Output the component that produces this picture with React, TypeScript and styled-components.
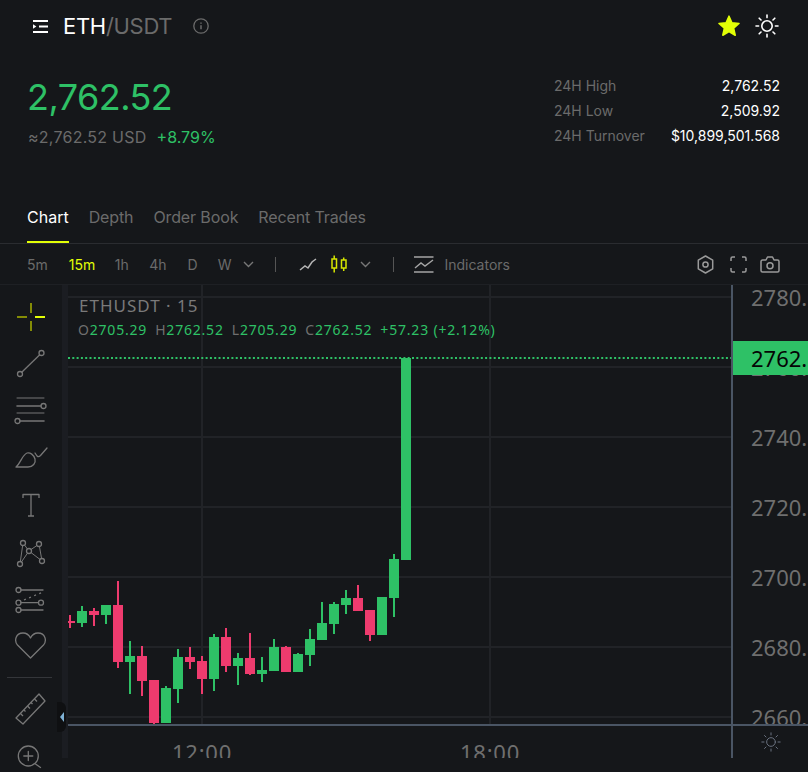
import React from "react";
import styled, { createGlobalStyle } from "styled-components";

const GREEN = "#2ec166";
const PINK = "#ee3b6e";
const YELLOW = "#e2ff06";
const GREY = "#6b6b6b";
const ICON = "#777777";
const AXIS = "#4a5564";
const GRID = "#212327";
const CHART_FONT = `"Noto Sans", sans-serif`;

const GlobalStyle = createGlobalStyle`
  html, body {
    margin: 0;
    padding: 0;
    height: 100%;
    background: #15171a;
    overflow: hidden;
  }
  body {
    font-family: Inter, "Liberation Sans", sans-serif;
  }
  * {
    box-sizing: border-box;
  }
`;

const Page = styled.div`
  width: 808px;
  height: 772px;
  overflow: hidden;
  background: #15171a;
  color: #fff;
`;

const Header = styled.header`
  display: flex;
  align-items: center;
  height: 52px;
  padding: 0 29px 0 33px;
`;

const Pair = styled.h1`
  margin: 0 0 0 15px;
  font-size: 22px;
  font-weight: 400;
  letter-spacing: -0.3px;
  color: #fff;
  span {
    color: ${GREY};
  }
`;

const InfoButton = styled.span`
  display: flex;
  margin-left: 21px;
  color: ${GREY};
`;

const HeaderActions = styled.div`
  display: flex;
  align-items: center;
  gap: 14px;
  margin-left: auto;
`;

const Summary = styled.section`
  display: flex;
  justify-content: space-between;
  height: 144px;
  padding: 22px 28px 0 27px;
`;

const PriceBlock = styled.div`
  display: flex;
  flex-direction: column;
`;

const LastPrice = styled.div`
  font-size: 36px;
  line-height: 46px;
  letter-spacing: -0.55px;
  color: ${GREEN};
`;

const SubPrice = styled.div`
  display: flex;
  gap: 10px;
  margin-top: 5px;
  padding-left: 1px;
  font-size: 16px;
  line-height: 24px;
  letter-spacing: 0.25px;
  color: ${GREY};
  b {
    font-weight: 400;
    letter-spacing: 0;
    color: ${GREEN};
  }
`;

const Stats = styled.div`
  display: grid;
  grid-template-columns: auto auto;
  grid-auto-rows: 25px;
  column-gap: 26px;
  align-items: center;
  margin-top: -1px;
  align-self: flex-start;
  font-size: 14px;
`;

const StatLabel = styled.span`
  color: ${GREY};
`;

const StatValue = styled.span`
  text-align: right;
  color: #fff;
`;

const TabBar = styled.nav`
  display: flex;
  gap: 20px;
  height: 48px;
  padding: 0 28px 0 27px;
  border-bottom: 1px solid #2a2c30;
`;

const TabItem = styled.span<{ $active?: boolean }>`
  height: 47px;
  padding-top: 11px;
  font-size: 16px;
  line-height: 20px;
  letter-spacing: ${(p) => (p.$active ? "0" : "-0.12px")};
  color: ${(p) => (p.$active ? "#fff" : GREY)};
  border-bottom: 2px solid ${(p) => (p.$active ? YELLOW : "transparent")};
`;

const Toolbar = styled.div`
  display: flex;
  align-items: center;
  height: 41px;
  padding: 0 28px 0 27px;
  border-bottom: 1px solid #1e2024;
  font-size: 14px;
  color: ${GREY};
`;

const Interval = styled.span<{ $active?: boolean; $gap: number }>`
  margin-right: ${(p) => p.$gap}px;
  color: ${(p) => (p.$active ? YELLOW : GREY)};
`;

const ToolDivider = styled.span<{ $left: number; $right: number }>`
  width: 1px;
  height: 15px;
  margin: 0 ${(p) => p.$right}px 0 ${(p) => p.$left}px;
  background: #555;
`;

const ToolIcon = styled.span<{ $left?: number }>`
  display: flex;
  margin-left: ${(p) => p.$left ?? 0}px;
`;

const ToolLabel = styled.span`
  margin-left: 10px;
`;

const ToolRight = styled.div`
  display: flex;
  align-items: center;
  margin-left: auto;
  color: #9a9a9a;
`;

const Workspace = styled.div`
  position: relative;
  display: flex;
  height: 487px;
`;

const Rail = styled.aside`
  flex: 0 0 62px;
  width: 62px;
  padding-top: 8px;
`;

const RailButton = styled.div`
  display: flex;
  align-items: center;
  justify-content: center;
  height: 47px;
`;

const RailDivider = styled.div`
  height: 1px;
  margin: 8px 10px 8px 7px;
  background: #34363a;
`;

const ChartFrame = styled.div`
  display: grid;
  flex: 1;
  grid-template-columns: 664px 1fr;
  grid-template-rows: 441px 32px;
  height: 473px;
  overflow: hidden;
  border-left: 6px solid #1b1d22;
`;

const Pane = styled.div`
  position: relative;
  height: 441px;
  overflow: hidden;
  border-bottom: 2px solid ${AXIS};
  svg {
    display: block;
  }
`;

const Legend = styled.div`
  position: absolute;
  top: 9px;
  left: 10px;
  font-family: ${CHART_FONT};
`;

const LegendTitle = styled.div`
  padding-left: 1px;
  font-size: 17px;
  line-height: 24px;
  letter-spacing: 1px;
  color: #7a7a7a;
`;

const LegendValues = styled.div`
  display: flex;
  gap: 8px;
  font-size: 14px;
  line-height: 24px;
  letter-spacing: 0.8px;
  color: ${GREEN};
  i {
    font-style: normal;
    color: #6f6f6f;
  }
`;

const PriceAxis = styled.div`
  position: relative;
  height: 441px;
  overflow: hidden;
  border-left: 2px solid ${AXIS};
  border-bottom: 2px solid ${AXIS};
  margin-left: -1px;
  font-family: ${CHART_FONT};
  font-size: 22px;
  color: #6f6f6f;
`;

const PriceTick = styled.div`
  height: 70px;
  padding: 0 0 0 18px;
  line-height: 24px;
  white-space: nowrap;
`;

const LastTag = styled.div`
  position: absolute;
  top: 56px;
  left: -2px;
  width: 80px;
  height: 34px;
  padding-left: 20px;
  line-height: 34px;
  white-space: nowrap;
  background: ${GREEN};
  color: #050505;
`;

const TimeAxis = styled.div`
  display: flex;
  gap: 168px;
  height: 32px;
  padding-left: 74px;
  overflow: hidden;
  font-family: ${CHART_FONT};
  font-size: 22px;
  line-height: 52px;
  letter-spacing: 0.8px;
  color: #6f6f6f;
`;

const TimeTick = styled.div`
  width: 120px;
  text-align: center;
`;

const AxisCorner = styled.div`
  display: flex;
  align-items: center;
  justify-content: center;
  height: 32px;
  margin-left: -1px;
  border-left: 2px solid ${AXIS};
  color: #6a7280;
`;

const CollapseHandle = styled.div`
  position: absolute;
  top: 417px;
  left: 57px;
  display: flex;
  align-items: center;
  width: 9px;
  height: 30px;
  padding-left: 3px;
  border-radius: 0 6px 6px 0;
  background: #0f1012;
`;

type Candle = [number, number, number, number, number, boolean?];

// x, wick top, wick bottom, body top, body bottom, up
const candles: Candle[] = [
  [70, 615, 628, 621, 623],
  [82, 606, 627, 611, 623, true],
  [94, 608, 626, 611, 615],
  [106, 605, 624, 605, 615, true],
  [118, 581, 668, 605, 662],
  [130, 641, 694, 656, 662, true],
  [142, 646, 696, 656, 681],
  [154, 680, 724, 680, 723],
  [166, 686, 723, 688, 723, true],
  [178, 649, 703, 657, 689, true],
  [190, 647, 669, 657, 662],
  [202, 656, 694, 661, 679],
  [214, 634, 691, 637, 679, true],
  [226, 628, 672, 637, 666],
  [238, 653, 685, 658, 666, true],
  [250, 633, 675, 658, 674],
  [262, 657, 682, 670, 674, true],
  [274, 639, 671, 647, 671, true],
  [286, 646, 672, 647, 672],
  [298, 653, 672, 654, 672, true],
  [310, 629, 666, 639, 655, true],
  [322, 602, 640, 623, 640, true],
  [334, 602, 634, 604, 624, true],
  [346, 590, 614, 598, 605, true],
  [358, 585, 611, 598, 611],
  [370, 610, 641, 610, 635],
  [382, 597, 635, 597, 635, true],
  [394, 554, 617, 559, 598, true],
  [406, 358, 560, 358, 560, true],
];

const gridRows = [297, 367, 437, 507, 577, 647, 717];
const gridCols = [202, 490];
const prices = ["2780.00", "2760.00", "2740.00", "2720.00", "2700.00", "2680.00", "2660.00"];

const MenuIcon = () => (
  <svg width="15" height="15" viewBox="0 0 15 15" fill="none" stroke="#fff" strokeWidth="2">
    <path d="M0 2h15M6 7.500h9M0 13h15" />
    <path d="M0 5.200 3.400 7.500 0 9.800z" fill="#fff" stroke="none" />
  </svg>
);

const InfoIcon = () => (
  <svg width="16" height="16" viewBox="0 0 16 16" fill="none" stroke="currentColor" strokeWidth="1.3">
    <circle cx="8" cy="8" r="7.200" />
    <path d="M8 7.200v4" strokeWidth="1.500" />
    <path d="M8 4.400v1.400" strokeWidth="1.500" />
  </svg>
);

const StarIcon = () => (
  <svg width="24" height="24" viewBox="0 0 24 24" fill={YELLOW} stroke={YELLOW} strokeWidth="1.600" strokeLinejoin="round">
    <path d="M12 2.200l2.900 6.600 7.100.7-5.400 4.700 1.600 7-6.200-3.700-6.200 3.700 1.600-7L2 9.500l7.100-.7z" />
  </svg>
);

const SunIcon = ({ size = 24, stroke = "#fff", width = 1.6 }: { size?: number; stroke?: string; width?: number }) => (
  <svg width={size} height={size} viewBox="0 0 24 24" fill="none" stroke={stroke} strokeWidth={width} strokeLinecap="round">
    <circle cx="12" cy="12" r="5.200" />
    <path d="M12 1v2.600M12 20.400V23M1 12h2.600M20.400 12H23M4.200 4.200 6 6M18 18l1.800 1.800M4.200 19.800 6 18M18 6l1.800-1.800" />
  </svg>
);

const Chevron = () => (
  <svg width="11" height="7" viewBox="0 0 11 7" fill="none" stroke="#777" strokeWidth="1.400">
    <path d="M1 1l4.500 4.500L10 1" />
  </svg>
);

const LineChartIcon = () => (
  <svg width="18" height="14" viewBox="0 0 18 14" fill="none" stroke="#b5b5b5" strokeWidth="1.500">
    <path d="M1 13l5-4 3 2 4-6 4-3" />
  </svg>
);

const CandleIcon = () => (
  <svg width="18" height="18" viewBox="0 0 18 18" fill="none" stroke="#d6e600" strokeWidth="1.500">
    <rect x="2" y="4" width="4.500" height="9" />
    <rect x="11.500" y="5" width="4.500" height="8" />
    <path d="M4.200 0.500V4M4.200 13v4.500M13.700 2.500V5M13.700 13v3" />
  </svg>
);

const IndicatorsIcon = () => (
  <svg width="20" height="17" viewBox="0 0 20 17" fill="none" stroke="#a5a5a5" strokeWidth="1.400">
    <path d="M0 1h19.500M0 16h19.500" />
    <path d="M1 12l6-5 4 3 8-6" />
  </svg>
);

const HexIcon = () => (
  <svg width="17" height="19" viewBox="0 0 17 19" fill="none" stroke="currentColor" strokeWidth="1.500" strokeLinejoin="round">
    <path d="M8.500 1l7.200 4.200v8.600L8.500 18l-7.200-4.200V5.200z" />
    <circle cx="8.500" cy="9.500" r="2.600" />
  </svg>
);

const FullscreenIcon = () => (
  <svg width="17" height="17" viewBox="0 0 17 17" fill="none" stroke="currentColor" strokeWidth="1.500">
    <path d="M1 5V2.500A1.500 1.500 0 0 1 2.500 1H5M12 1h2.500A1.500 1.500 0 0 1 16 2.500V5M16 12v2.500a1.500 1.500 0 0 1-1.500 1.500H12M5 16H2.500A1.500 1.500 0 0 1 1 14.500V12" />
  </svg>
);

const CameraIcon = () => (
  <svg width="20" height="17" viewBox="0 0 20 17" fill="none" stroke="currentColor" strokeWidth="1.500" strokeLinejoin="round">
    <path d="M1 5.500A1.500 1.500 0 0 1 2.500 4H6l1.500-3h5L14 4h3.500A1.500 1.500 0 0 1 19 5.500v9a1.500 1.500 0 0 1-1.500 1.500h-15A1.500 1.500 0 0 1 1 14.500z" />
    <circle cx="10" cy="9.800" r="3" />
  </svg>
);

const RailSvg = ({ children }: { children: React.ReactNode }) => (
  <svg width="34" height="34" viewBox="0 0 34 34" fill="none" stroke={ICON} strokeWidth="1.300" strokeLinecap="round" strokeLinejoin="round">
    {children}
  </svg>
);

const railIcons: React.ReactNode[] = [
  <svg key="cross" width="34" height="34" viewBox="0 0 34 34" fill="none" stroke="#a9b400" strokeWidth="1.500">
    <path d="M3 17h10M17 3v10M17 21v10" />
    <path d="M21 17h10" stroke={YELLOW} strokeWidth="2" />
  </svg>,
  <RailSvg key="line">
    <circle cx="6" cy="27" r="2.500" />
    <circle cx="27.500" cy="6" r="2.500" />
    <path d="M8 25 25.500 8" />
  </RailSvg>,
  <RailSvg key="fib">
    <path d="M3 4h27M3 19h27" strokeWidth="1" />
    <path d="M3 12h24M6 27h24" strokeWidth="1.600" />
    <circle cx="29.500" cy="12" r="2.500" />
    <circle cx="3.500" cy="27" r="2.500" />
  </RailSvg>,
  <RailSvg key="brush">
    <path d="M2 26H14C19 26 22 22 21 18C20 14 16 11 13 12C8 14 7 22 2 26Z" />
    <path d="M21 12L23 15Q24.500 16.500 26.500 14.500L33 7" />
  </RailSvg>,
  <RailSvg key="text">
    <path d="M9 10V6.500H25V10M17 6.500V28M14 28H20" strokeLinecap="butt" />
  </RailSvg>,
  <RailSvg key="pattern">
    <path d="M6 29 9 8 15 16 25 9 28 26 15 16 6 29" strokeWidth="1" />
    <g fill="#15171a">
      <circle cx="9" cy="8" r="2.500" />
      <circle cx="25" cy="9" r="2.500" />
      <circle cx="15" cy="16" r="2.500" />
      <circle cx="6" cy="29" r="2.500" />
      <circle cx="28" cy="26" r="2.500" />
    </g>
  </RailSvg>,
  <RailSvg key="multi">
    <path d="M7 8h22M7 20.700h17M7 28h22" />
    <path d="M10 18 29 10" strokeDasharray="2 3.500" strokeLinecap="butt" />
    <circle cx="4.500" cy="8" r="2.500" />
    <circle cx="4.500" cy="20.700" r="2.500" />
    <circle cx="27" cy="20.700" r="2.500" />
    <circle cx="4.500" cy="28" r="2.500" />
  </RailSvg>,
  <RailSvg key="heart">
    <path d="M16.500 29L3.500 16C0 12 1.500 4 9 4C13 4 15 6 16.500 9C18 6 20 4 24 4C31.500 4 33 12 29.500 16Z" />
  </RailSvg>,
];

const RulerIcon = () => (
  <RailSvg>
    <path d="M2 25 25 1 31 8 9 31Z" />
    <path d="M6.500 20.500l2.500 2.500M10 17l1.500 1.500M13.500 13l2.500 2.500M17 9.500l1.500 1.500M20.500 6l2.500 2.500" strokeLinecap="butt" />
  </RailSvg>
);

const ZoomIcon = () => (
  <RailSvg>
    <circle cx="14.300" cy="16" r="10" />
    <path d="M14.300 11.500v9M9.800 16h9M21.500 24l5 3.500" />
  </RailSvg>
);

const CandleChart = () => (
  <svg width="664" height="439" viewBox="68 285 664 439">
    {gridRows.map((y) => (
      <rect key={y} x="68" y={y - 1} width="664" height="2" fill={GRID} />
    ))}
    {gridCols.map((x) => (
      <rect key={x} x={x - 1} y="285" width="2" height="439" fill={GRID} />
    ))}
    {candles.map(([x, wickTop, wickBottom, top, bottom, up]) => (
      <g key={x} fill={up ? GREEN : PINK}>
        <rect x={x - 1} y={wickTop} width="2" height={wickBottom - wickTop} />
        <rect x={x - 5} y={top} width="10" height={bottom - top} />
      </g>
    ))}
    <line x1="68" y1="358" x2="732" y2="358" stroke={GREEN} strokeWidth="2" strokeDasharray="2 2.300" />
  </svg>
);

export default function App() {
  return (
    <Page>
      <GlobalStyle />
      <Header>
        <MenuIcon />
        <Pair>
          ETH<span>/USDT</span>
        </Pair>
        <InfoButton>
          <InfoIcon />
        </InfoButton>
        <HeaderActions>
          <StarIcon />
          <SunIcon />
        </HeaderActions>
      </Header>

      <Summary>
        <PriceBlock>
          <LastPrice>2,762.52</LastPrice>
          <SubPrice>
            ≈2,762.52 USD <b>+8.79%</b>
          </SubPrice>
        </PriceBlock>
        <Stats>
          <StatLabel>24H High</StatLabel>
          <StatValue>2,762.52</StatValue>
          <StatLabel>24H Low</StatLabel>
          <StatValue>2,509.92</StatValue>
          <StatLabel>24H Turnover</StatLabel>
          <StatValue>$10,899,501.568</StatValue>
        </Stats>
      </Summary>

      <TabBar>
        <TabItem $active>Chart</TabItem>
        <TabItem>Depth</TabItem>
        <TabItem>Order Book</TabItem>
        <TabItem>Recent Trades</TabItem>
      </TabBar>

      <Toolbar>
        <Interval $gap={21}>5m</Interval>
        <Interval $gap={19.5} $active>
          15m
        </Interval>
        <Interval $gap={20.5}>1h</Interval>
        <Interval $gap={21}>4h</Interval>
        <Interval $gap={20}>D</Interval>
        <Interval $gap={12}>W</Interval>
        <Chevron />
        <ToolDivider $left={21} $right={23} />
        <LineChartIcon />
        <ToolIcon $left={13}>
          <CandleIcon />
        </ToolIcon>
        <ToolIcon $left={12}>
          <Chevron />
        </ToolIcon>
        <ToolDivider $left={22} $right={20} />
        <IndicatorsIcon />
        <ToolLabel>Indicators</ToolLabel>
        <ToolRight>
          <HexIcon />
          <ToolIcon $left={16}>
            <FullscreenIcon />
          </ToolIcon>
          <ToolIcon $left={13}>
            <CameraIcon />
          </ToolIcon>
        </ToolRight>
      </Toolbar>

      <Workspace>
        <Rail>
          {railIcons.map((icon, i) => (
            <RailButton key={i}>{icon}</RailButton>
          ))}
          <RailDivider />
          <RailButton>
            <RulerIcon />
          </RailButton>
          <RailButton>
            <ZoomIcon />
          </RailButton>
        </Rail>

        <ChartFrame>
          <Pane>
            <CandleChart />
            <Legend>
              <LegendTitle>ETHUSDT · 15</LegendTitle>
              <LegendValues>
                <span>
                  <i>O</i>2705.29
                </span>
                <span>
                  <i>H</i>2762.52
                </span>
                <span>
                  <i>L</i>2705.29
                </span>
                <span>
                  <i>C</i>2762.52
                </span>
                <span>+57.23 (+2.12%)</span>
              </LegendValues>
            </Legend>
          </Pane>
          <PriceAxis>
            {prices.map((price) => (
              <PriceTick key={price}>{price}</PriceTick>
            ))}
            <LastTag>2762.52</LastTag>
          </PriceAxis>
          <TimeAxis>
            <TimeTick>12:00</TimeTick>
            <TimeTick>18:00</TimeTick>
          </TimeAxis>
          <AxisCorner>
            <SunIcon size={20} stroke="#6a7280" width={1.2} />
          </AxisCorner>
        </ChartFrame>
        <CollapseHandle>
          <svg width="4" height="10" viewBox="0 0 4 10">
            <path d="M4 0v10L0 5z" fill="#7fb2d6" />
          </svg>
        </CollapseHandle>
      </Workspace>
    </Page>
  );
}
